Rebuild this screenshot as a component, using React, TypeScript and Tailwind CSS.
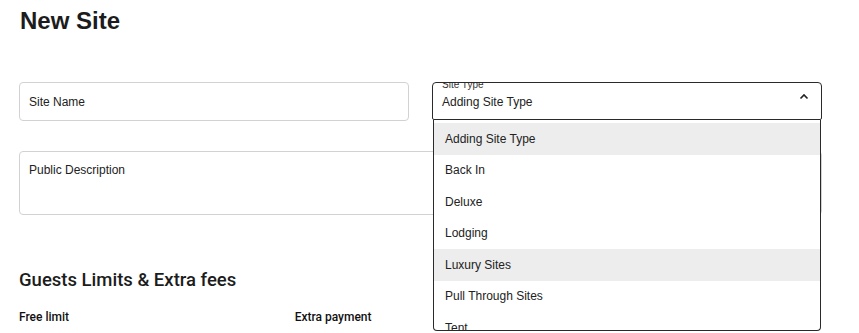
import React from 'react';

const siteTypes = [
  'Adding Site Type',
  'Back In',
  'Deluxe',
  'Lodging',
  'Luxury Sites',
  'Pull Through Sites',
  'Tent',
];

const highlighted = ['Adding Site Type', 'Luxury Sites'];

const SiteTypeSelect = () => (
  <div className="relative">
    <div className="relative h-[38px] rounded-t-[4px] rounded-b-[2px] border border-[#2a2a2a] bg-white overflow-hidden pl-[9px] pt-[11px]">
      <span className="absolute left-[9px] top-[-3px] text-[10px] leading-none text-[#333]">Site Type</span>
      <div className="text-[12px] leading-4 text-[#222]">Adding Site Type</div>
      <svg className="absolute right-[12px] top-[10px]" width="10" height="7" viewBox="0 0 10 7" fill="none">
        <path d="M1.5 5.5L5 2L8.5 5.5" stroke="#222" strokeWidth="1.6" />
      </svg>
    </div>

    {/* open option list */}
    <div className="absolute left-[1px] right-[1px] top-full z-10 h-[211px] overflow-hidden rounded-b-[4px] border-x border-b border-[#2a2a2a] bg-white pt-[3px]">
      {siteTypes.map((type) => (
        <div
          key={type}
          className={`flex h-[31.5px] items-center pl-[11px] text-[12px] text-[#222] ${
            highlighted.includes(type) ? 'bg-[#ededed]' : ''
          }`}
        >
          {type}
        </div>
      ))}
    </div>
  </div>
);

export default function App() {
  return (
    <div className="min-h-[333px] bg-white pl-[19px] font-['Liberation_Sans',Arial,sans-serif] text-[#222]">
      <h1 className="pt-[5px] pl-[1px] text-[24px] font-bold leading-8 text-[#1c1c1c]">New Site</h1>

      <div className="mt-[45px] w-[803px]">
        <div className="grid grid-cols-2 items-start gap-x-[23px]">
          <div className="flex h-[39px] items-center rounded-[4px] border border-[#d2d2d2] px-[9px] text-[12px]">
            Site Name
          </div>
          <SiteTypeSelect />
        </div>

        <div className="mt-[30px] h-[64px] rounded-[4px] border border-[#d2d2d2] px-[9px] pt-[10px] text-[12px] leading-4">
          Public Description
        </div>
      </div>

      <h2 className="mt-[51px] font-['Roboto',sans-serif] text-[18.5px] font-medium leading-7 text-[#1c1c1c]">
        Guests Limits &amp; Extra fees
      </h2>

      <div className="mt-[15px] grid w-[803px] grid-cols-3 gap-x-6 font-['Roboto',sans-serif] text-[12px] leading-4 font-medium text-[#111]">
        <div>Free limit</div>
        <div>Extra payment</div>
        <div />
      </div>
    </div>
  );
}
